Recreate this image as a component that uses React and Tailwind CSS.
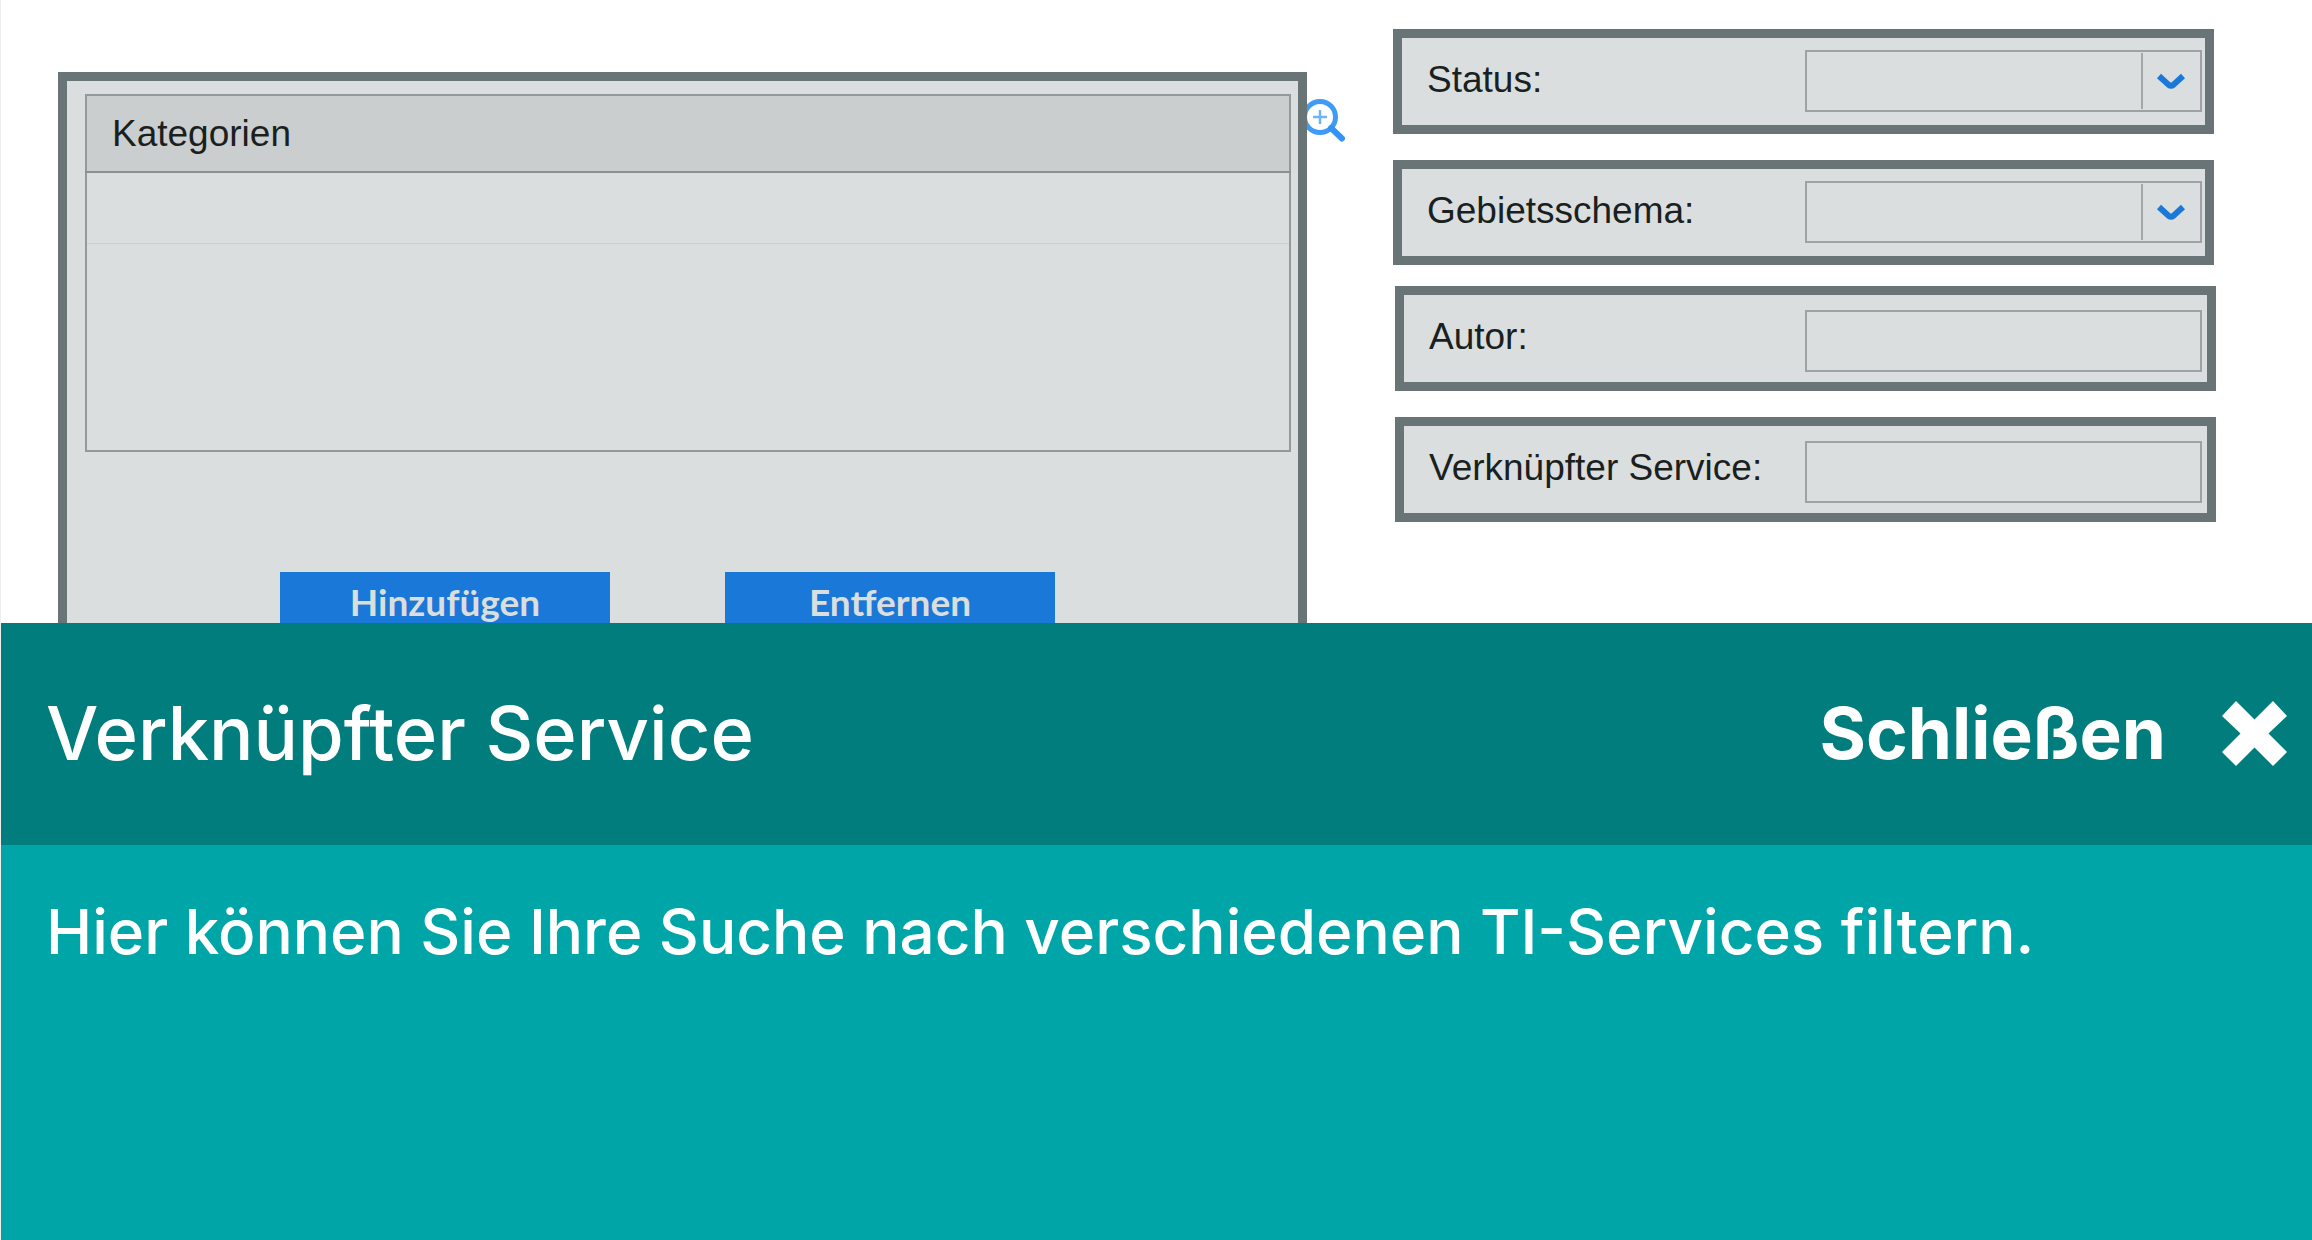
import React from "react";

function Field({ id, label, className = "", children }) {
  return (
    <div
      className={`flex h-[105px] items-start border-[9px] border-[#697477] bg-[#dadede] pl-[25px] pr-[3px] ${className}`}
    >
      <label
        htmlFor={id}
        className="mt-[21px] flex-1 whitespace-nowrap text-[37px] leading-[42px] text-[#1a1f20]"
      >
        {label}
      </label>
      {children}
    </div>
  );
}

function SelectField({ id, label }) {
  return (
    <Field id={id} label={label}>
      <div className="relative mt-3 h-[62px] w-[397px] shrink-0">
        <select
          id={id}
          className="h-full w-full appearance-none border-2 border-[#9ea2a3] bg-transparent text-[37px]"
        />
        <span className="pointer-events-none absolute right-0 top-[3px] flex h-14 w-[61px] items-center justify-center border-l-2 border-[#a3a7a8] pr-1">
          <svg width="30" height="18" viewBox="0 0 30 18" fill="none" aria-hidden="true">
            <path d="M3 4L12.500 12.700Q15 14.500 17.500 12.700L27 4" stroke="#1a79d8" strokeWidth="6" />
          </svg>
        </span>
      </div>
    </Field>
  );
}

function TextField({ id, label }) {
  return (
    <Field id={id} label={label} className="-mr-0.5 ml-0.5">
      <input
        id={id}
        type="text"
        className="mr-0.5 mt-[15px] h-[62px] w-[397px] shrink-0 border-2 border-[#9ea2a3] bg-transparent px-3 text-[37px]"
      />
    </Field>
  );
}

function CategoryPanel() {
  return (
    <section className="relative mt-[72px] flex h-[640px] flex-col border-[9px] border-[#697477] bg-[#dadede] pl-[18px] pr-[7px] pt-[13px]">
      <table className="w-full border-collapse border-2 border-[#95999a]">
        <thead>
          <tr className="h-[77px] border-b-2 border-[#8c9091] bg-[#cacecf]">
            <th scope="col" className="px-[25px] text-left text-[37px] font-normal leading-[42px] text-[#1a1f20]">
              Kategorien
            </th>
          </tr>
        </thead>
        <tbody>
          <tr className="h-[71px] border-b border-[#cbcfd0]">
            <td />
          </tr>
          <tr className="h-[208px]">
            <td />
          </tr>
        </tbody>
      </table>
      <div className="ml-[195px] mt-[120px] flex gap-[115px] font-['Lato',sans-serif] text-[37px] font-bold leading-[60px] text-[#dadede]">
        <button type="button" className="h-[66px] w-[330px] bg-[#1a79d8] pb-1.5">
          Hinzufügen
        </button>
        <button type="button" className="h-[66px] w-[330px] bg-[#1a79d8] pb-1.5">
          Entfernen
        </button>
      </div>
      <button type="button" aria-label="Suchen" className="absolute left-full top-[18px] ml-[9px]">
        <svg width="40" height="46" viewBox="0 0 40 46" fill="none" aria-hidden="true">
          <circle cx="13" cy="18" r="15.500" stroke="#3f9bf5" strokeWidth="5" />
          <path d="M6 18H20M13 11V25" stroke="#6fb3f6" strokeWidth="2.500" />
          <path d="M24 29L35 39.500" stroke="#3394f4" strokeWidth="6" strokeLinecap="round" />
        </svg>
      </button>
    </section>
  );
}

export default function App() {
  return (
    <div className="flex h-screen flex-col overflow-hidden border-l border-[#efefef] bg-white font-['Liberation_Sans',Arial,sans-serif]">
      <main className="grid min-h-0 flex-1 grid-cols-[1249fr_821fr] gap-[86px] overflow-hidden pl-[57px] pr-[98px]">
        <CategoryPanel />
        <form className="flex flex-col gap-[26px] pt-[29px]">
          <SelectField id="status" label="Status:" />
          <SelectField id="gebietsschema" label="Gebietsschema:" />
          <div className="-mt-[5px] flex flex-col gap-[26px]">
            <TextField id="autor" label="Autor:" />
            <TextField id="service" label="Verknüpfter Service:" />
          </div>
        </form>
      </main>
      <section
        aria-labelledby="help-title"
        className="shrink-0 bg-[#00a6a7] font-['Inter',sans-serif] text-white"
      >
        <header className="flex h-[222px] items-center justify-between bg-[#007d7c] pb-0.5 pl-[45px] pr-[25px]">
          <h2 id="help-title" className="text-[74px] font-medium leading-[88px]">
            Verknüpfter Service
          </h2>
          <button type="button" className="flex items-center gap-14 text-[71px] font-bold leading-[88px]">
            Schließen
            <svg width="65" height="65" viewBox="0 0 65 65" fill="currentColor" aria-hidden="true">
              <path d="M14 0L32.500 18.500L51 0L65 15L46.500 32.500L65 51L51 65L32.500 46.500L14 65L0 51L18.500 32.500L0 15Z" />
            </svg>
          </button>
        </header>
        <p className="min-h-[395px] px-[45px] pt-[50px] text-[62px] font-medium leading-[74px]">
          Hier können Sie Ihre Suche nach verschiedenen TI-Services filtern.
        </p>
      </section>
    </div>
  );
}
